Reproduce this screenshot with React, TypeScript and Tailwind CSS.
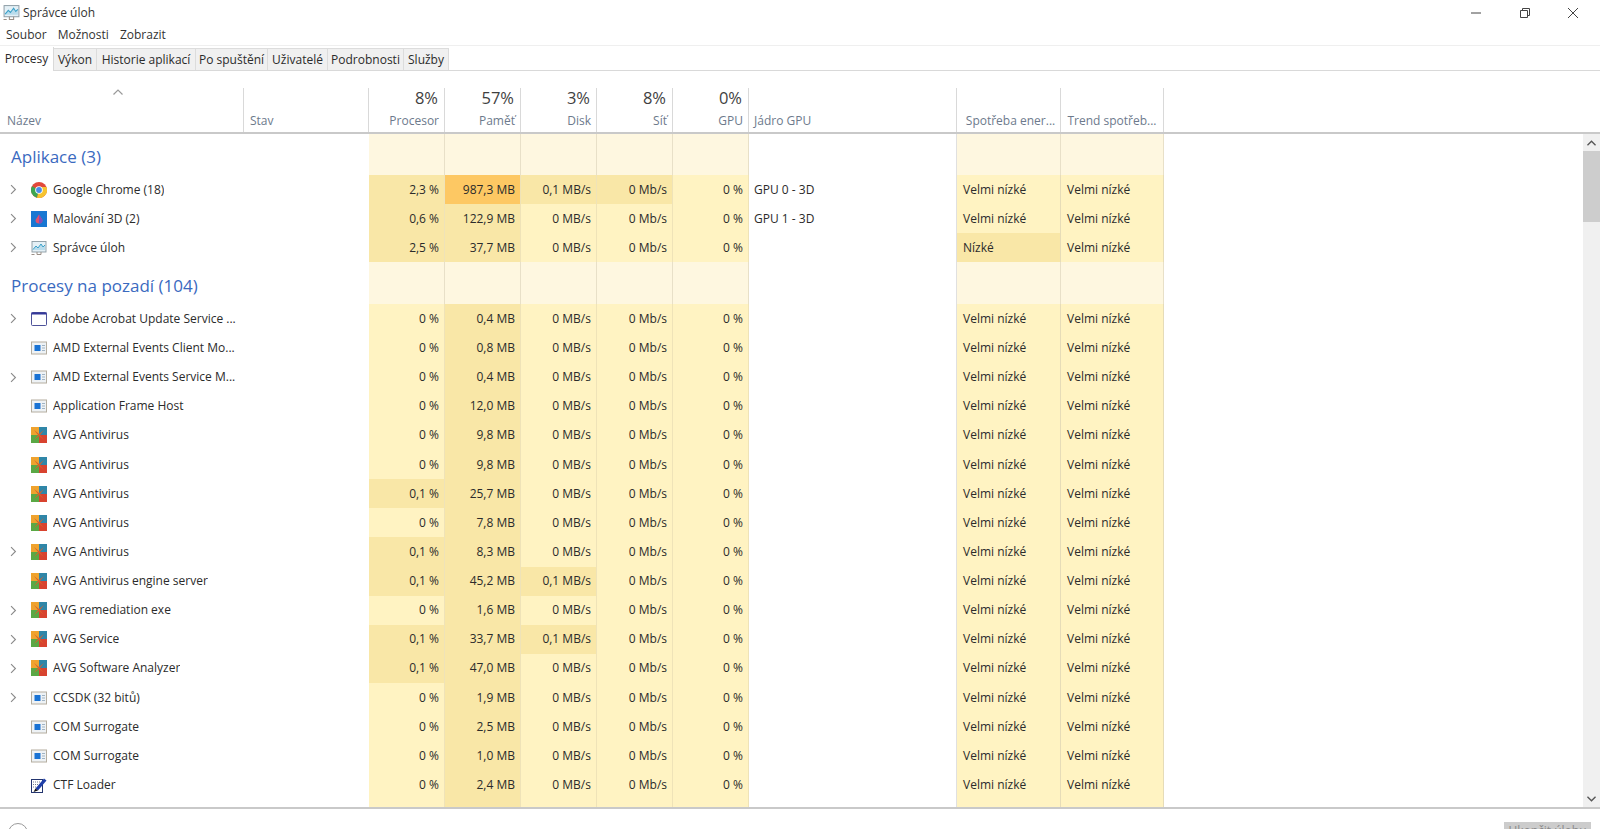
import React from 'react'

type Level = 0 | 1 | 2 | 3

interface Proc {
  name: string
  icon: string
  expand?: boolean
  cpu: string
  mem: string
  disk?: string
  net?: string
  core?: string
  power?: string
  cpuLvl?: Level
  memLvl?: Level
  diskLvl?: Level
  netLvl?: Level
  powerLvl?: Level
}

const levels: Record<Level, string> = {
  0: 'bg-[#fff3c2]',
  1: 'bg-[#f9e7a7]',
  2: 'bg-[#fbe08f]',
  3: 'bg-[#fdc863]',
}

const apps: Proc[] = [
  { name: 'Google Chrome (18)', icon: 'chrome', expand: true, cpu: '2,3 %', mem: '987,3 MB', disk: '0,1 MB/s', core: 'GPU 0 - 3D', cpuLvl: 1, memLvl: 3, diskLvl: 1, netLvl: 1 },
  { name: 'Malování 3D (2)', icon: 'paint', expand: true, cpu: '0,6 %', mem: '122,9 MB', core: 'GPU 1 - 3D', cpuLvl: 1, memLvl: 1 },
  { name: 'Správce úloh', icon: 'taskmgr', expand: true, cpu: '2,5 %', mem: '37,7 MB', power: 'Nízké', cpuLvl: 1, memLvl: 1, powerLvl: 1 },
]

const background: Proc[] = [
  { name: 'Adobe Acrobat Update Service ...', icon: 'window', expand: true, cpu: '0 %', mem: '0,4 MB', memLvl: 1 },
  { name: 'AMD External Events Client Mo...', icon: 'service', cpu: '0 %', mem: '0,8 MB', memLvl: 1 },
  { name: 'AMD External Events Service M...', icon: 'service', expand: true, cpu: '0 %', mem: '0,4 MB', memLvl: 1 },
  { name: 'Application Frame Host', icon: 'service', cpu: '0 %', mem: '12,0 MB', memLvl: 1 },
  { name: 'AVG Antivirus', icon: 'avg', cpu: '0 %', mem: '9,8 MB', memLvl: 1 },
  { name: 'AVG Antivirus', icon: 'avg', cpu: '0 %', mem: '9,8 MB', memLvl: 1 },
  { name: 'AVG Antivirus', icon: 'avg', cpu: '0,1 %', mem: '25,7 MB', cpuLvl: 1, memLvl: 1 },
  { name: 'AVG Antivirus', icon: 'avg', cpu: '0 %', mem: '7,8 MB', memLvl: 1 },
  { name: 'AVG Antivirus', icon: 'avg', expand: true, cpu: '0,1 %', mem: '8,3 MB', cpuLvl: 1, memLvl: 1 },
  { name: 'AVG Antivirus engine server', icon: 'avg', cpu: '0,1 %', mem: '45,2 MB', disk: '0,1 MB/s', cpuLvl: 1, memLvl: 1, diskLvl: 1 },
  { name: 'AVG remediation exe', icon: 'avg', expand: true, cpu: '0 %', mem: '1,6 MB', memLvl: 1 },
  { name: 'AVG Service', icon: 'avg', expand: true, cpu: '0,1 %', mem: '33,7 MB', disk: '0,1 MB/s', cpuLvl: 1, memLvl: 1, diskLvl: 1 },
  { name: 'AVG Software Analyzer', icon: 'avg', expand: true, cpu: '0,1 %', mem: '47,0 MB', cpuLvl: 1, memLvl: 1 },
  { name: 'CCSDK (32 bitů)', icon: 'service', expand: true, cpu: '0 %', mem: '1,9 MB', memLvl: 1 },
  { name: 'COM Surrogate', icon: 'service', cpu: '0 %', mem: '2,5 MB', memLvl: 1 },
  { name: 'COM Surrogate', icon: 'service', cpu: '0 %', mem: '1,0 MB', memLvl: 1 },
  { name: 'CTF Loader', icon: 'ctf', cpu: '0 %', mem: '2,4 MB', memLvl: 1 },
]

const tabs = [
  { label: 'Výkon', w: 'w-[43px]' },
  { label: 'Historie aplikací', w: 'w-[99px]' },
  { label: 'Po spuštění', w: 'w-[72px]' },
  { label: 'Uživatelé', w: 'w-[60px]' },
  { label: 'Podrobnosti', w: 'w-[76px]' },
  { label: 'Služby', w: 'w-[45px]' },
]

function TaskIcon({ className }: { className: string }) {
  return (
    <svg viewBox="0 0 16 16" className={className}>
      <rect x="1" y="1.5" width="14" height="10.5" fill="#e4f0f6" stroke="#8b9aa3" strokeWidth="0.9" />
      <path d="M2 9.5l3-3.5 2 2 3-4 2 3 2-2v5H2z" fill="#b9dcec" />
      <path d="M2 9.5l3-3.5 2 2 3-4 2 3 2-2" fill="none" stroke="#3aa0c8" strokeWidth="1" />
      <path d="M0.5 14.5h3M6 12v2.5h4V12" fill="none" stroke="#9a8f86" strokeWidth="1" />
    </svg>
  )
}

function ProcIcon({ kind }: { kind: string }) {
  if (kind === 'chrome') {
    return (
      <svg viewBox="0 0 16 16" className="h-4 w-4">
        <circle cx="8" cy="8" r="8" fill="#e2483a" />
        <path d="M8 8L1 4.2A8 8 0 0 0 6 15.8z" fill="#3ca652" />
        <path d="M8 8l-2 7.8A8 8 0 0 0 15.4 5H8z" fill="#f6c430" />
        <circle cx="8" cy="8" r="3.8" fill="#fff" />
        <circle cx="8" cy="8" r="2.9" fill="#4a8ce8" />
      </svg>
    )
  }
  if (kind === 'paint') {
    return (
      <svg viewBox="0 0 16 16" className="h-4 w-4">
        <rect width="16" height="16" fill="#1877d2" />
        <path d="M8 3.5L11.5 9a3.5 3.5 0 0 1-7 0z" fill="#e0506e" />
        <path d="M8 3.5L11.5 9a3.5 3.5 0 0 1-3.5 3.5z" fill="#7c4fc0" />
      </svg>
    )
  }
  if (kind === 'taskmgr') return <TaskIcon className="h-4 w-4" />
  if (kind === 'window') {
    return (
      <svg viewBox="0 0 16 16" className="h-4 w-4">
        <rect x="0.5" y="1.5" width="15" height="13" rx="1" fill="#fff" stroke="#3a3f8f" strokeWidth="0.9" />
        <rect x="0.5" y="1.5" width="15" height="2" fill="#34399a" />
      </svg>
    )
  }
  if (kind === 'avg') {
    return (
      <svg viewBox="0 0 16 16" className="h-4 w-4">
        <rect width="8" height="8" fill="#efa32e" />
        <rect x="8" width="8" height="8" fill="#2f86a8" />
        <rect y="8" width="8" height="8" fill="#5aa845" />
        <rect x="8" y="8" width="8" height="8" fill="#d8432f" />
        <path d="M3 3l5 4 5-4-4 5 4 5-5-4-5 4 4-5z" fill="#d8602c" />
      </svg>
    )
  }
  if (kind === 'ctf') {
    return (
      <svg viewBox="0 0 16 16" className="h-4 w-4">
        <rect x="0.5" y="2.5" width="11" height="13" fill="#fff" stroke="#23356f" />
        <path d="M2 5h7M2 7.5h5M2 10h3" stroke="#6f7a8c" strokeDasharray="1 1" />
        <path d="M4.5 11.5L13 1.5l2.5 2L7 13.5z" fill="#1f3ea8" />
        <path d="M2.5 15l2-3.5 2.5 2z" fill="#111" />
      </svg>
    )
  }
  return (
    <svg viewBox="0 0 16 16" className="h-4 w-4">
      <rect x="0.5" y="2" width="15" height="12" fill="#eef2f5" stroke="#b5aea0" />
      <rect x="3.5" y="5" width="6" height="6" fill="#1a73d4" />
      <path d="M11 5.5h3M11 8h3M11 10.5h3" stroke="#9fb3c4" />
    </svg>
  )
}

function Chevron() {
  return (
    <svg viewBox="0 0 8 12" className="h-[11px] w-[7px]">
      <path d="M1.2 1l5 5-5 5" fill="none" stroke="#8a8a8a" strokeWidth="1.3" />
    </svg>
  )
}

function HeaderCol({ pct, label, w }: { pct?: string; label: string; w: string }) {
  return (
    <div className={`${w} flex shrink-0 flex-col items-end justify-end border-r border-[#d9d9d9] pr-[5px] pb-[2px]`}>
      {pct && <span className="pr-[1px] text-[16.5px] leading-[22px] text-[#3f3f3f]">{pct}</span>}
      <span className="mt-[3px] text-[12px] leading-[18px] text-[#6d7a8c]">{label}</span>
    </div>
  )
}

function Cell({ w, lvl = 0, children }: { w: string; lvl?: Level; children?: React.ReactNode }) {
  return (
    <div className={`${w} ${levels[lvl]} flex shrink-0 items-center justify-end border-r border-[#efe3b8] pr-[5px]`}>
      {children}
    </div>
  )
}

function TextCell({ w, lvl = 0, children }: { w: string; lvl?: Level; children?: React.ReactNode }) {
  return (
    <div className={`${w} ${levels[lvl]} flex shrink-0 items-center border-r border-[#e6dcb8] pl-[6px]`}>
      {children}
    </div>
  )
}

function Row({ p }: { p: Proc }) {
  return (
    <div className="flex h-[29.125px] text-[12px] text-[#2b2b2b]">
      <div className="flex w-[244px] shrink-0 items-center">
        <div className="flex w-[31px] shrink-0 justify-start pl-[10px]">{p.expand && <Chevron />}</div>
        <ProcIcon kind={p.icon} />
        <span className="ml-[6px] truncate whitespace-nowrap">{p.name}</span>
      </div>
      <div className="w-[125px] shrink-0" />
      <Cell w="w-[76px]" lvl={p.cpuLvl}>{p.cpu}</Cell>
      <Cell w="w-[76px]" lvl={p.memLvl}>{p.mem}</Cell>
      <Cell w="w-[76px]" lvl={p.diskLvl}>{p.disk ?? '0 MB/s'}</Cell>
      <Cell w="w-[76px]" lvl={p.netLvl}>{p.net ?? '0 Mb/s'}</Cell>
      <Cell w="w-[76px]">0 %</Cell>
      <div className="flex w-[208px] shrink-0 items-center border-r border-[#e0e0e0] pl-[5px]">{p.core}</div>
      <TextCell w="w-[104px]" lvl={p.powerLvl}>{p.power ?? 'Velmi nízké'}</TextCell>
      <TextCell w="w-[103px]">Velmi nízké</TextCell>
    </div>
  )
}

// the next row is scrolled out of view, only its coloured columns show above the line
function FillerRow() {
  return (
    <div className="flex flex-1">
      <div className="w-[369px] shrink-0" />
      <Cell w="w-[76px]" />
      <Cell w="w-[76px]" lvl={1} />
      <Cell w="w-[76px]" />
      <Cell w="w-[76px]" />
      <Cell w="w-[76px]" />
      <div className="w-[208px] shrink-0 border-r border-[#e0e0e0]" />
      <TextCell w="w-[104px]" />
      <TextCell w="w-[103px]" />
    </div>
  )
}

function GroupRow({ title, h }: { title: string; h: string }) {
  const shade = 'shrink-0 bg-[#fef7e0] border-r border-[#e8e0c8]'
  return (
    <div className={`flex ${h}`}>
      <div className="flex w-[369px] shrink-0 items-center pl-[11px] pt-[4px] text-[17px] text-[#3a6abf]">{title}</div>
      <div className={`w-[76px] ${shade}`} />
      <div className={`w-[76px] ${shade}`} />
      <div className={`w-[76px] ${shade}`} />
      <div className={`w-[76px] ${shade}`} />
      <div className={`w-[76px] ${shade}`} />
      <div className="w-[208px] shrink-0 border-r border-[#e0e0e0]" />
      <div className={`w-[104px] ${shade}`} />
      <div className={`w-[103px] ${shade}`} />
    </div>
  )
}

export default function App() {
  return (
    <div className="flex h-[829px] w-[1600px] flex-col overflow-hidden bg-white font-['Open_Sans','Noto_Sans',sans-serif] text-[12px] text-[#2b2b2b]">
      {/* title bar */}
      <div className="flex h-[25px] shrink-0 items-center pl-[3px]">
        <TaskIcon className="h-[17px] w-[17px]" />
        <span className="ml-[3px] text-[#333]">Správce úloh</span>
        <div className="ml-auto flex items-center gap-[36.5px] pr-[21px]">
          <svg viewBox="0 0 12 12" className="h-[12px] w-[12px]"><path d="M1 6h10" stroke="#444" strokeWidth="1" /></svg>
          <svg viewBox="0 0 12 12" className="h-[12px] w-[12px]">
            <path d="M1.5 3.5h7v7h-7zM3.5 3.5V1.5h7v7h-2" fill="none" stroke="#444" strokeWidth="1" />
          </svg>
          <svg viewBox="0 0 12 12" className="h-[12px] w-[12px]"><path d="M1 1l10 10M11 1L1 11" stroke="#444" strokeWidth="1" /></svg>
        </div>
      </div>
      {/* menu */}
      <div className="flex h-[21px] shrink-0 items-center gap-[11px] border-b border-[#efefef] pl-[6px] text-[#333]">
        <span>Soubor</span>
        <span>Možnosti</span>
        <span>Zobrazit</span>
      </div>
      {/* tabs */}
      <div className="flex h-[25px] shrink-0 items-end border-b border-[#d9d9d9]">
        <div className="z-10 -mb-[1px] flex h-[24px] w-[54px] items-center justify-center border-r border-[#d9d9d9] bg-white">Procesy</div>
        {tabs.map(t => (
          <div
            key={t.label}
            className={`${t.w} flex h-[22px] shrink-0 items-center justify-center whitespace-nowrap border-r border-t border-[#dcdcdc] bg-[#f0f0f0]`}
          >
            {t.label}
          </div>
        ))}
      </div>
      {/* column header */}
      <div className="flex h-[63px] shrink-0 items-stretch border-b-2 border-[#c9c9c9] pt-[17px]">
        <div className="relative flex w-[244px] shrink-0 items-end border-r border-[#d9d9d9] pb-[2px] pl-[7px] text-[#6d7a8c]">
          <span className="leading-[18px]">Název</span>
          <svg viewBox="0 0 10 6" className="absolute left-[113px] top-[1px] h-[6px] w-[10px]">
            <path d="M0.5 5.5L5 1l4.5 4.5" fill="none" stroke="#9a9a9a" strokeWidth="1.2" />
          </svg>
        </div>
        <div className="flex w-[125px] shrink-0 items-end border-r border-[#d9d9d9] pb-[2px] pl-[6px] text-[#6d7a8c]">
          <span className="leading-[18px]">Stav</span>
        </div>
        <HeaderCol w="w-[76px]" pct="8%" label="Procesor" />
        <HeaderCol w="w-[76px]" pct="57%" label="Paměť" />
        <HeaderCol w="w-[76px]" pct="3%" label="Disk" />
        <HeaderCol w="w-[76px]" pct="8%" label="Síť" />
        <HeaderCol w="w-[76px]" pct="0%" label="GPU" />
        <div className="flex w-[208px] shrink-0 items-end border-r border-[#d9d9d9] pb-[2px] pl-[5px] text-[#6d7a8c]">
          <span className="leading-[18px]">Jádro GPU</span>
        </div>
        <div className="flex w-[104px] shrink-0 items-end justify-center whitespace-nowrap border-r border-[#d9d9d9] pb-[2px] pl-[4px] text-[#6d7a8c]">
          <span className="leading-[18px]">Spotřeba ener...</span>
        </div>
        <div className="flex w-[103px] shrink-0 items-end justify-center whitespace-nowrap border-r border-[#d9d9d9] pb-[2px] text-[#6d7a8c]">
          <span className="leading-[18px]">Trend spotřeb...</span>
        </div>
      </div>
      {/* table + scrollbar */}
      <div className="flex h-[675px] shrink-0 border-b-2 border-[#c9c9c9]">
        <div className="flex w-[1583px] shrink-0 flex-col overflow-hidden">
          <GroupRow title="Aplikace (3)" h="h-[41px]" />
          {apps.map(p => <Row key={p.name} p={p} />)}
          <GroupRow title="Procesy na pozadí (104)" h="h-[42px]" />
          {background.map((p, i) => <Row key={i} p={p} />)}
          <FillerRow />
        </div>
        <div className="flex w-[17px] shrink-0 flex-col bg-[#f0f0f0]">
          <div className="flex h-[17px] items-center justify-center">
            <svg viewBox="0 0 10 6" className="h-[6px] w-[9px]"><path d="M0.5 5.5L5 1l4.5 4.5" fill="none" stroke="#555" strokeWidth="1.5" /></svg>
          </div>
          <div className="h-[71px] bg-[#cdcdcd]" />
          <div className="flex-1" />
          <div className="flex h-[17px] items-center justify-center">
            <svg viewBox="0 0 10 6" className="h-[6px] w-[9px]"><path d="M0.5 0.5L5 5l4.5-4.5" fill="none" stroke="#555" strokeWidth="1.5" /></svg>
          </div>
        </div>
      </div>
      {/* footer */}
      <div className="relative flex-1 bg-white">
        <div className="absolute left-[8px] top-[14px] h-[20px] w-[20px] rounded-full border border-[#9a9a9a]" />
        <div className="absolute left-[1504px] top-[13px] flex h-[22px] w-[87px] justify-center bg-[#cccccc] text-[#8a8a8a]">Ukončit úlohu</div>
      </div>
    </div>
  )
}
